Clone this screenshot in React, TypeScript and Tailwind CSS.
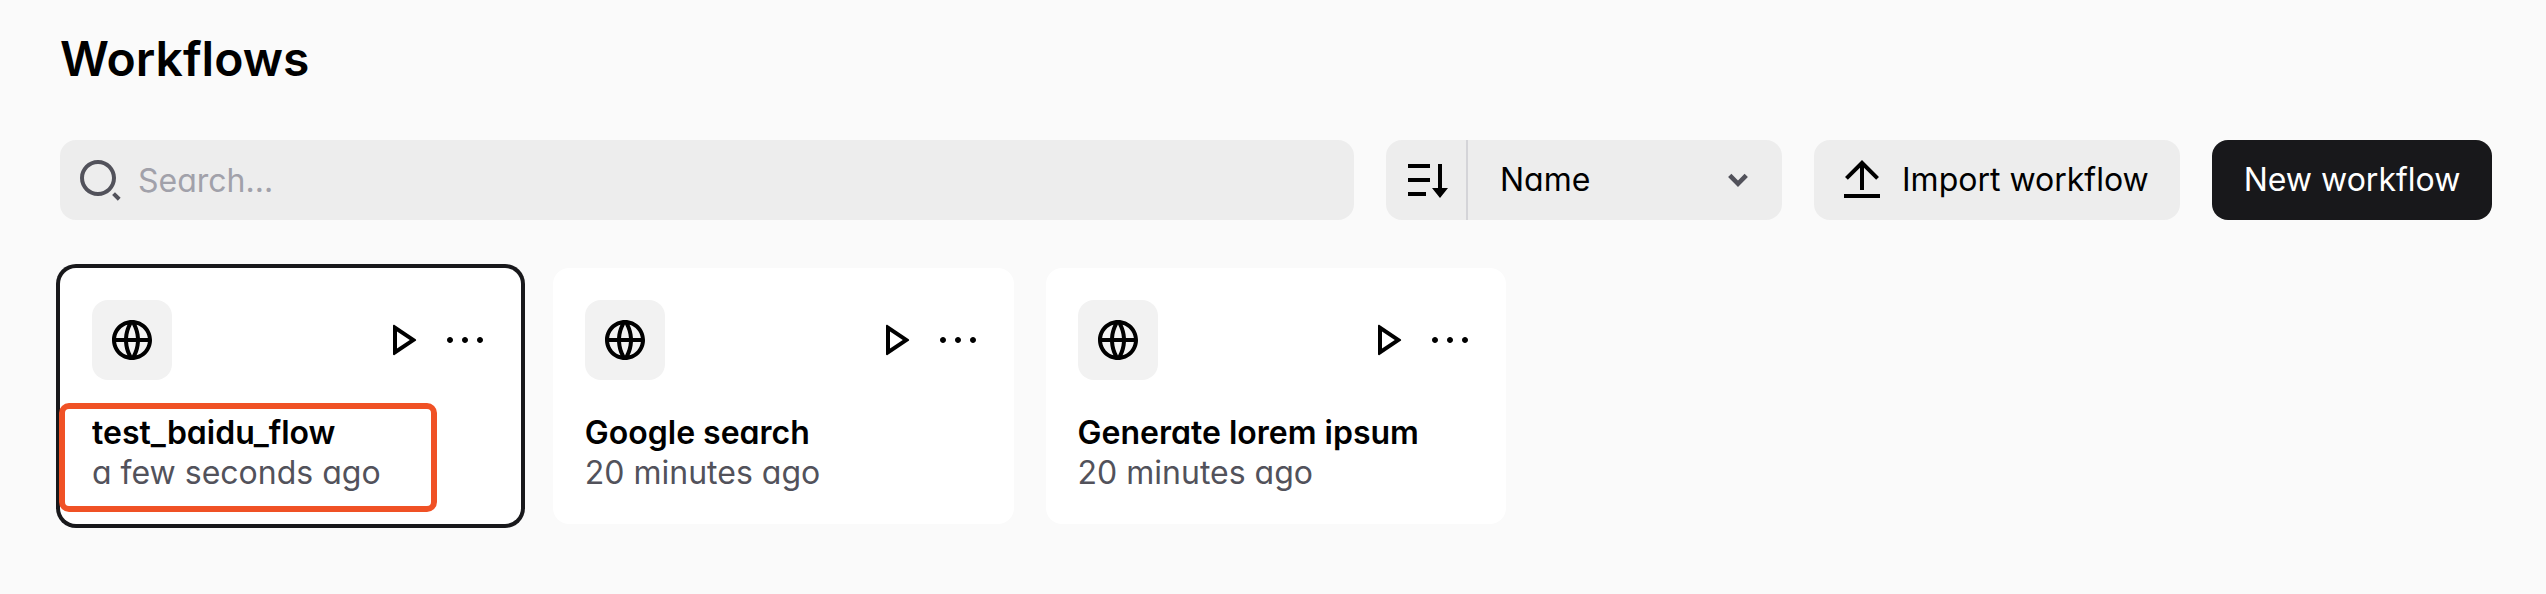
import React from "react";
import {
  RiArrowDropDownLine,
  RiGlobalLine,
  RiMoreLine,
  RiPlayLine,
  RiSearch2Line,
  RiSortDesc,
  RiUploadLine,
} from "react-icons/ri";

interface Workflow {
  name: string;
  updated: string;
  selected?: boolean;
}

const workflows: Workflow[] = [
  { name: "test_baidu_flow", updated: "a few seconds ago", selected: true },
  { name: "Google search", updated: "20 minutes ago" },
  { name: "Generate lorem ipsum", updated: "20 minutes ago" },
];

function WorkflowCard({ name, updated, selected }: Workflow) {
  return (
    <li
      className={
        selected
          ? "relative rounded-2xl bg-white px-8 pt-8 pb-[31px] ring-4 ring-[#18181b]"
          : "relative rounded-2xl bg-white px-8 pt-8 pb-[31px]"
      }
    >
      <div className="flex items-center">
        <span className="flex size-20 items-center justify-center rounded-2xl bg-[#f2f2f2]">
          <RiGlobalLine className="size-12" />
        </span>
        <div className="ml-auto flex gap-4">
          <button type="button" aria-label={`Run ${name}`}>
            <RiPlayLine className="size-12" />
          </button>
          <button type="button" aria-label={`More options for ${name}`}>
            <RiMoreLine className="size-12" />
          </button>
        </div>
      </div>
      <h2 className="mt-[33px] truncate leading-10 font-semibold">{name}</h2>
      <p className="leading-10 text-[#52525b]">{updated}</p>
      {selected && (
        <span className="pointer-events-none absolute top-[135px] -left-px h-[109px] w-[378px] rounded-[10px] border-6 border-[#f05125]" />
      )}
    </li>
  );
}

export default function App() {
  return (
    <main className="min-h-screen bg-[#fafafa] pt-7 pr-[54px] pb-[70px] pl-[60px] font-[Inter,sans-serif] text-[32px] text-black [font-feature-settings:'cv11']">
      <h1 className="text-[48px] leading-[62px] font-semibold">Workflows</h1>

      <div className="mt-[50px] flex h-20 gap-8">
        <div className="relative min-w-0 flex-1">
          <RiSearch2Line className="pointer-events-none absolute top-4 left-4 size-12 text-[#52525b]" />
          <input
            type="search"
            aria-label="Search workflows"
            placeholder="Search..."
            className="h-full w-full rounded-2xl bg-[#ededed] pr-8 pl-[78px] placeholder:text-[#a1a1aa]"
          />
        </div>

        <div className="flex w-[396px] overflow-hidden rounded-2xl bg-[#ededed]">
          <button
            type="button"
            aria-label="Sort descending"
            className="flex w-[82px] items-center border-r-2 border-[#d4d4d8] pl-4"
          >
            <RiSortDesc className="size-12" />
          </button>
          <div className="relative flex-1">
            <select
              aria-label="Sort by"
              defaultValue="name"
              className="h-full w-full appearance-none bg-transparent pr-16 pl-8"
            >
              <option value="name">Name</option>
              <option value="createdAt">Created date</option>
            </select>
            <RiArrowDropDownLine className="pointer-events-none absolute top-3 right-4 size-14 text-[#52525b]" />
          </div>
        </div>

        <button
          type="button"
          className="flex w-[366px] items-center gap-4 rounded-2xl bg-[#ededed] pl-6 whitespace-nowrap"
        >
          <RiUploadLine className="size-12" />
          Import workflow
        </button>

        <button
          type="button"
          className="w-[280px] rounded-2xl bg-[#18181b] text-center whitespace-nowrap text-white"
        >
          New workflow
        </button>
      </div>

      <ul className="mt-12 grid grid-cols-5 gap-8">
        {workflows.map((workflow) => (
          <WorkflowCard key={workflow.name} {...workflow} />
        ))}
      </ul>
    </main>
  );
}
